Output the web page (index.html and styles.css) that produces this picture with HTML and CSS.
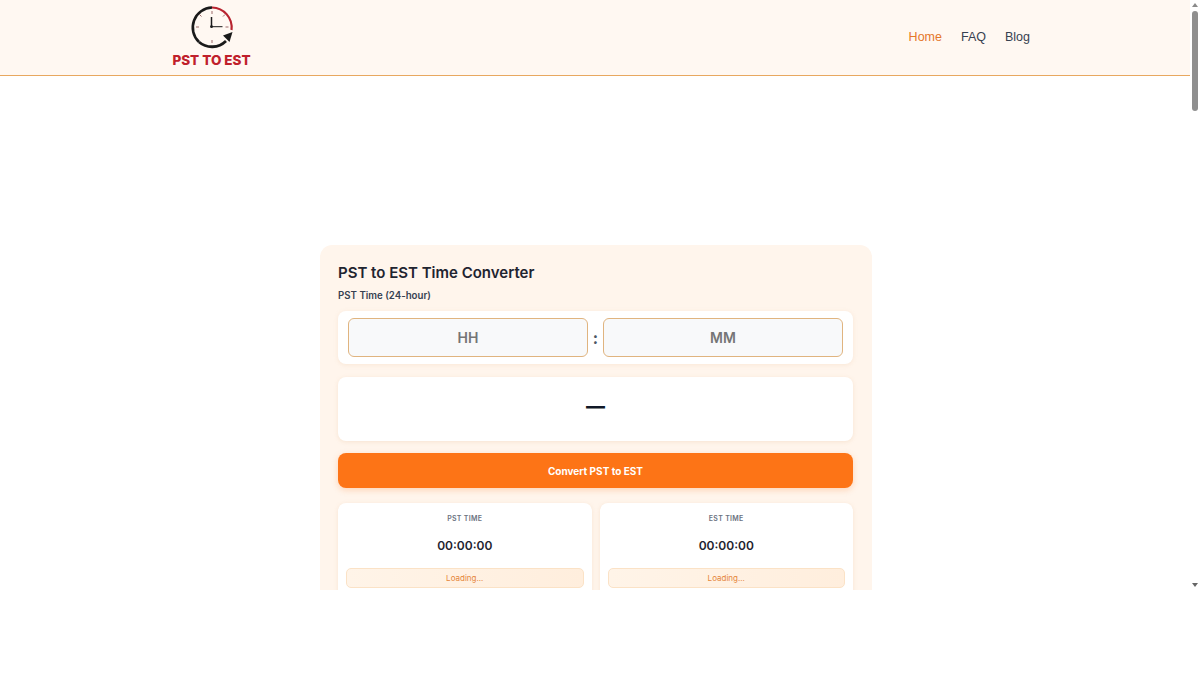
FILE: index.html
```html
<!DOCTYPE html>
<html lang="en">
<head>
    <meta charset="UTF-8">
    <meta name="viewport" content="width=device-width, initial-scale=1.0">
    <title>PST to EST Time Converter</title>
    <link rel="stylesheet" href="styles.css">
</head>
<body>
    <div id="frame">
        <div id="page">
            <header id="top">
                <a href="#" class="logo">
                    <svg width="44" height="44" viewBox="0 0 44 44" fill="none">
                        <path d="M9 37A20 20 0 0 1 22 2.500" stroke="#1a1a1a" stroke-width="2.600"/>
                        <path d="M22 2.500A20 20 0 0 1 41.500 25" stroke="#b8232f" stroke-width="2.200"/>
                        <path d="M9 37A20 20 0 0 0 36 36" stroke="#1a1a1a" stroke-width="2.800"/>
                        <path d="M33 30.500l9.500-3.500-3 10z" fill="#1a1a1a"/>
                        <path d="M22 6v3M35 9.500l-2 2M38.500 22h-3M6 22h3M9.500 9.500l2 2M22 38v-3" stroke="#9c6a6a" stroke-width="1"/>
                        <path d="M21.500 12v10" stroke="#1a1a1a" stroke-width="1.500"/>
                        <path d="M21.500 21.700h11" stroke="#1a1a1a" stroke-width="1"/>
                        <circle cx="21.500" cy="21.700" r="1.400" fill="#1a1a1a"/>
                    </svg>
                    <span class="logo-text">PST TO EST</span>
                </a>
                <nav id="nav">
                    <a href="#" class="on">Home</a>
                    <a href="#">FAQ</a>
                    <a href="#">Blog</a>
                </nav>
            </header>
            <div id="adslot"></div>
            <main id="card">
                <h1>PST to EST Time Converter</h1>
                <label class="lbl">PST Time (24-hour)</label>
                <div class="inputs">
                    <input type="text" placeholder="HH">
                    <span class="colon">:</span>
                    <input type="text" placeholder="MM">
                </div>
                <div class="result">—</div>
                <button class="btn">Convert PST to EST</button>
                <div class="clocks">
                    <div class="clock">
                        <div class="zone">PST TIME</div>
                        <div class="time">00:00:00</div>
                        <div class="date">Loading...</div>
                    </div>
                    <div class="clock">
                        <div class="zone">EST TIME</div>
                        <div class="time">00:00:00</div>
                        <div class="date">Loading...</div>
                    </div>
                </div>
            </main>
        </div>
        <div id="bar">
            <span class="arrow up"></span>
            <span class="thumb"></span>
            <span class="arrow down"></span>
        </div>
    </div>
</body>
</html>
```

FILE: styles.css
```css
* { margin:0; padding:0; box-sizing: border-box;}
body {
    background-color: #fff;
    font-family: "Inter", "Liberation Sans", sans-serif;
    color: #1f2430;
}
#frame {
    display: flex;
    height: 590px;
    overflow: hidden;
}
#page {
    flex: 1;
    min-width: 0;
}
#bar {
    width: 10px;
    display: flex;
    flex-direction: column;
    align-items: center;
    padding-top: 3px;
}
.thumb {
    width: 6px;
    height: 100px;
    margin-top: 4px;
    background-color: #8f8f8f;
    border-radius: 3px;
}
.arrow {
    width: 0;
    height: 0;
    border-left: 3px solid transparent;
    border-right: 3px solid transparent;
}
.arrow.up { border-bottom: 4px solid #8a8a8a; }
.arrow.down {
    border-top: 4px solid #666;
    margin-top: auto;
    margin-bottom: 3px;
}
#top {
    height: 76px;
    background-color: #fff8f2;
    border-bottom: 1px solid #e8a860;
    display: flex;
    justify-content: space-between;
    align-items: flex-start;
    padding: 0 160px 0 172px;
}
.logo {
    width: 79px;
    padding-top: 5px;
    display: flex;
    flex-direction: column;
    align-items: center;
    text-decoration: none;
}
.logo-text {
    font-size: 13.500px;
    line-height: 18px;
    font-weight: 800;
    color: #c0202b;
    white-space: nowrap;
    margin-top: 2px;
}
#nav {
    display: flex;
    gap: 19px;
    padding-top: 29px;
}
#nav a {
    font-family: "Liberation Sans", sans-serif;
    font-size: 12.500px;
    line-height: 17px;
    color: #374151;
    text-decoration: none;
}
#nav a.on { color: #e5772a; }
#adslot { height: 169px; }
#card {
    width: 552px;
    margin-left: 320px;
    padding: 18px 19px 18px 18px;
    background-color: #fff5ec;
    border-radius: 12px;
}
h1 {
    font-size: 15px;
    line-height: 20px;
    font-weight: 600;
    color: #1f2430;
}
.lbl {
    display: block;
    margin-top: 6px;
    font-size: 9.700px;
    line-height: 14px;
    font-weight: 600;
    color: #374151;
}
.inputs {
    display: flex;
    align-items: center;
    gap: 4px;
    height: 53px;
    margin-top: 8px;
    padding: 0 10px;
    background-color: #fff;
    border-radius: 8px;
    box-shadow: 0 1px 4px rgba(230,190,150,.25);
}
.inputs input {
    flex: 1;
    min-width: 0;
    height: 39px;
    text-align: center;
    font-family: inherit;
    font-size: 14px;
    font-weight: 600;
    background-color: #f8f9fa;
    border: 1px solid #e0b47f;
    border-radius: 6px;
}
.inputs input::placeholder { color: #757575; opacity: 1; }
.colon {
    width: 7px;
    text-align: center;
    font-size: 16px;
    font-weight: 700;
    color: #4b5563;
}
.result {
    height: 64px;
    margin-top: 13px;
    background-color: #fff;
    border-radius: 8px;
    box-shadow: 0 1px 4px rgba(230,190,150,.3);
    text-align: center;
    font-size: 19px;
    line-height: 60px;
    font-weight: 800;
    color: #111827;
}
.btn {
    display: block;
    width: 100%;
    height: 35px;
    margin-top: 12px;
    background-color: #fd7416;
    border: 0;
    border-radius: 8px;
    box-shadow: 0 2px 6px rgba(253,116,22,.25);
    color: #fff;
    font-family: inherit;
    font-size: 10px;
    font-weight: 700;
}
.clocks {
    display: flex;
    gap: 8px;
    margin-top: 15px;
}
.clock {
    flex: 1;
    height: 110px;
    padding: 10px 8px;
    background-color: #fff;
    border-radius: 8px;
    text-align: center;
    box-shadow: 0 1px 4px rgba(230,190,150,.3);
}
.zone {
    font-size: 7px;
    line-height: 11px;
    font-weight: 600;
    letter-spacing: .3px;
    color: #6b7280;
}
.time {
    margin-top: 13px;
    font-size: 12px;
    line-height: 18px;
    font-weight: 600;
    color: #1f2430;
}
.date {
    height: 20px;
    margin-top: 13px;
    background: linear-gradient(90deg, #fff4e8, #ffeedd);
    border: 1px solid #fbe2c6;
    border-radius: 5px;
    font-size: 8px;
    line-height: 18px;
    color: #e5853a;
}
```
